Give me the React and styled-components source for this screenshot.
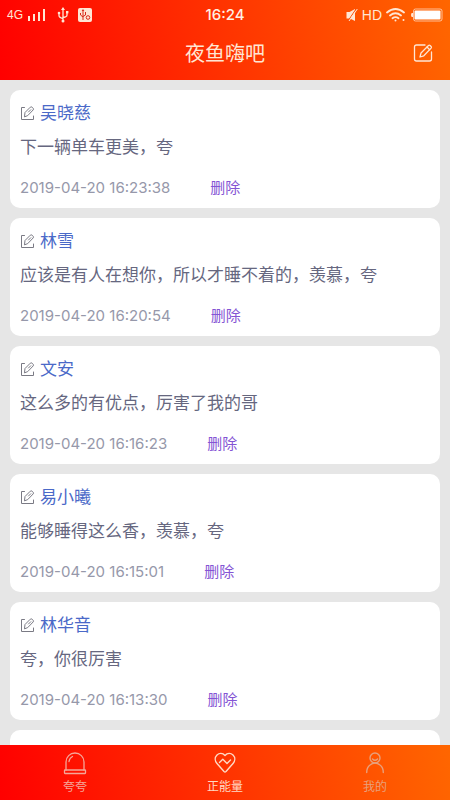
import React from "react";
import styled, { createGlobalStyle } from "styled-components";

const GlobalStyle = createGlobalStyle`
  * { box-sizing: border-box; }
  body {
    margin: 0;
    background: #e6e6e6;
    font-family: Inter, "Noto Sans CJK SC", sans-serif;
  }
  button { font: inherit; border: 0; padding: 0; background: none; cursor: pointer; }
`;

const Screen = styled.div`
  display: flex;
  flex-direction: column;
  height: 100vh;
  overflow: hidden;
`;

const Header = styled.header`
  flex: none;
  color: #ffe6d4;
  background: linear-gradient(80deg, #ff0000, #ff6600);
`;

const StatusBar = styled.div`
  display: grid;
  grid-template-columns: 1fr auto 1fr;
  align-items: center;
  height: 30px;
  padding: 0 7px;
`;

const StatusGroup = styled.div`
  display: flex;
  align-items: center;
  justify-content: ${(p) => (p.$end ? "flex-end" : "flex-start")};
  gap: 4px;
`;

const Network = styled.span`
  font-family: "Liberation Sans", Arial, sans-serif;
  font-size: ${(p) => p.$size}px;
  line-height: 16px;
`;

const Clock = styled.time`
  font-size: 15px;
  line-height: 20px;
  font-weight: 500;
  color: #fff0e4;
`;

const TitleBar = styled.div`
  display: grid;
  grid-template-columns: 1fr auto 1fr;
  align-items: center;
  height: 50px;
  padding: 0 17px 4px;
`;

const Title = styled.h1`
  grid-column: 2;
  margin: 0;
  padding-top: 2px;
  font-size: 20px;
  line-height: 28px;
  font-weight: 400;
`;

const ComposeButton = styled.button`
  justify-self: end;
  display: flex;
  color: inherit;
`;

const Feed = styled.main`
  flex: 1;
  min-height: 0;
  overflow: hidden;
  display: flex;
  flex-direction: column;
  gap: 10px;
  padding: 10px;
`;

const Card = styled.article`
  flex: none;
  display: flex;
  flex-direction: column;
  min-height: 118px;
  padding: 11px 10px 9px;
  border-radius: 10px;
  background: #fff;
`;

const Author = styled.h2`
  display: flex;
  align-items: center;
  gap: 5px;
  margin: 0 0 9px;
  font-size: 17px;
  line-height: 24px;
  font-weight: 400;
  color: #4a69c8;
  svg { color: #7a7a84; }
`;

const Message = styled.p`
  margin: 0;
  font-size: 17px;
  line-height: 26px;
  color: #66677f;
`;

const Meta = styled.footer`
  display: flex;
  align-items: center;
  gap: 40px;
  margin-top: 18px;
  font-size: 15px;
  line-height: 20px;
  color: #9698aa;
`;

const DeleteButton = styled.button`
  color: #8454d4;
`;

const TabBar = styled.nav`
  flex: none;
  display: grid;
  grid-template-columns: repeat(3, 1fr);
  height: 55px;
  background: linear-gradient(80deg, #ff0000, #ff6600);
`;

const Tab = styled.button`
  display: flex;
  flex-direction: column;
  align-items: center;
  gap: 3px;
  padding-top: 6px;
  font-size: 12px;
  line-height: 18px;
  color: ${(p) => (p.$active ? "#ffd9c4" : p.$tint)};
`;

const stroke = { fill: "none", stroke: "currentColor", strokeLinecap: "round", strokeLinejoin: "round" };

const SignalIcon = () => (
  <svg width="19" height="12" viewBox="0 0 19 12" fill="currentColor">
    <rect x="1" y="7" width="2" height="5" />
    <rect x="6" y="5" width="2" height="7" />
    <rect x="11" y="3" width="2" height="9" />
    <rect x="16" y="0" width="2" height="12" />
  </svg>
);

const UsbIcon = () => (
  <svg width="24" height="16" viewBox="-3 0 24 16" {...stroke} strokeWidth="1.300">
    <path d="M10 2v12M6 6v2.500q0 2 4 3M14 5v3q0 2-4 2.500" />
    <path d="M10 0l2 3H8z" fill="currentColor" stroke="none" />
    <circle cx="10" cy="14" r="1.500" fill="currentColor" stroke="none" />
    <circle cx="6" cy="6" r="1.300" fill="currentColor" stroke="none" />
    <rect x="13" y="4" width="2.400" height="2.400" fill="currentColor" stroke="none" />
  </svg>
);

const DebugIcon = () => (
  <svg width="14" height="14" viewBox="0 0 14 14">
    <rect width="14" height="14" rx="2" fill="currentColor" />
    <g fill="none" stroke="#d82a18" strokeWidth="1">
      <path d="M5 2v10M2.500 5v2l2.500 2M7.500 4v3L5 8.500" />
      <circle cx="10" cy="9.500" r="1.800" />
    </g>
    <path d="M5 1l1.300 2H3.700z" fill="#d82a18" />
  </svg>
);

const MutedIcon = () => (
  <svg width="12" height="14" viewBox="0 0 12 14">
    <path d="M0.500 4h3L9 1v12L4 10.500H0.500z" fill="currentColor" />
    <path d="M10 1L2 13" stroke="#ff4a00" strokeWidth="1" />
    <path d="M11.300 1L3 13" stroke="currentColor" strokeWidth="1" />
  </svg>
);

const WifiIcon = () => (
  <svg width="20" height="14" viewBox="0 0 20 14" {...stroke} strokeWidth="1.800">
    <path d="M1 4.500q8.500-7 17 0M4 7.500q5.500-4.500 11 0M6.500 10.300q3-2.300 6 0" />
    <circle cx="9.500" cy="12.500" r="1" fill="currentColor" stroke="none" />
    <circle cx="17.500" cy="12" r="1" fill="currentColor" stroke="none" />
  </svg>
);

const BatteryIcon = () => (
  <svg width="33" height="14" viewBox="0 0 33 14">
    <rect x="3.500" y="1" width="28.500" height="12" rx="2" fill="none" stroke="currentColor" strokeOpacity="0.700" />
    <rect x="4.500" y="2.500" width="26" height="9" rx="1" fill="#fff" />
    <path d="M3 5H2Q1 5 1 7t1 2h1z" fill="currentColor" />
  </svg>
);

const ComposeIcon = () => (
  <svg width="20" height="20" viewBox="0 0 20 20" {...stroke} strokeWidth="1.300">
    <path d="M12 2H3.500Q1.500 2 1.500 4v12q0 2 2 2h13q2 0 2-2V9" />
    <path d="M7 14l1-4L15.500 2.500q.8-.7 1.600 0l1 1q.7.800 0 1.600L10.800 12.800z" />
    <path d="M14 4l2.700 2.700" />
  </svg>
);

const EditIcon = () => (
  <svg width="15" height="15" viewBox="0 0 15 15" {...stroke} strokeWidth="1">
    <path d="M4.500 1.500h-3v12h12v-3.500" />
    <path d="M4.500 10.500l.5-4L10.300 1.200q.9-.8 1.800 0l1 1q.8.900 0 1.800L8 9.300z" />
    <path d="M8.500 6l2.300-2.300" />
  </svg>
);

const AlarmIcon = () => (
  <svg width="24" height="24" viewBox="0 0 24 24" {...stroke} strokeWidth="1.300">
    <path d="M3 19V11a9 9 0 0 1 18 0v8" />
    <rect x="1.500" y="19" width="21" height="3.500" rx="0.500" />
    <path d="M6 10.500Q6.500 7 9.500 5.500" />
  </svg>
);

const HeartIcon = () => (
  <svg width="24" height="24" viewBox="0 0 24 24" {...stroke} strokeWidth="1.400">
    <path d="M12 4.500C9.500 1.500 6 2 4 4c-2.500 2.500-2.200 6 0 8.500l7 8q1 1 2 0l7-8c2.200-2.500 2.500-6 0-8.500-2-2-5.500-2.500-8 .5z" />
    <path d="M6.500 11.500l3.300-3.300 4.200 4.200 3.500-3.500" />
  </svg>
);

const PersonIcon = () => (
  <svg width="24" height="24" viewBox="0 0 24 24" {...stroke} strokeWidth="1.400">
    <circle cx="12" cy="7" r="5" />
    <path d="M9.500 8q2.500 2.500 5 0M3.700 21.500q0-5 3.300-7.500 5-4 10 0 3.300 2.500 3.300 7.500" />
  </svg>
);

const posts = [
  { author: "吴晓慈", text: "下一辆单车更美，夸", time: "2019-04-20 16:23:38" },
  { author: "林雪", text: "应该是有人在想你，所以才睡不着的，羡慕，夸", time: "2019-04-20 16:20:54" },
  { author: "文安", text: "这么多的有优点，厉害了我的哥", time: "2019-04-20 16:16:23" },
  { author: "易小曦", text: "能够睡得这么香，羡慕，夸", time: "2019-04-20 16:15:01" },
  { author: "林华音", text: "夸，你很厉害", time: "2019-04-20 16:13:30" },
];

function Post({ author, text, time }) {
  return (
    <Card>
      <Author><EditIcon />{author}</Author>
      <Message>{text}</Message>
      <Meta>
        <time>{time}</time>
        <DeleteButton type="button">删除</DeleteButton>
      </Meta>
    </Card>
  );
}

export default function App() {
  return (
    <Screen>
      <GlobalStyle />
      <Header>
        <StatusBar>
          <StatusGroup>
            <Network $size={12}>4G</Network>
            <SignalIcon />
            <UsbIcon />
            <DebugIcon />
          </StatusGroup>
          <Clock>16:24</Clock>
          <StatusGroup $end>
            <MutedIcon />
            <Network $size={14}>HD</Network>
            <WifiIcon />
            <BatteryIcon />
          </StatusGroup>
        </StatusBar>
        <TitleBar>
          <Title>夜鱼嗨吧</Title>
          <ComposeButton type="button" aria-label="发布"><ComposeIcon /></ComposeButton>
        </TitleBar>
      </Header>
      <Feed>
        {posts.map((post) => <Post key={post.time} {...post} />)}
        <Card />
      </Feed>
      <TabBar>
        <Tab type="button" $tint="#f5a698"><AlarmIcon />夸夸</Tab>
        <Tab type="button" $active aria-current="page"><HeartIcon />正能量</Tab>
        <Tab type="button" $tint="#e8a07c"><PersonIcon />我的</Tab>
      </TabBar>
    </Screen>
  );
}
